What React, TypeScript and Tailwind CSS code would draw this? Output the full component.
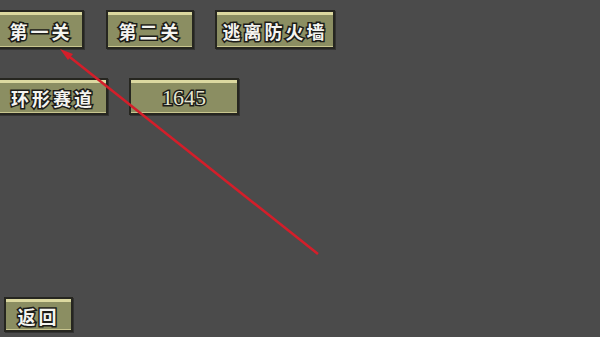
import React from 'react';

type BtnProps = {
  label: string;
  className?: string;
  numeric?: boolean;
};

const GameButton: React.FC<BtnProps> = ({ label, className = '', numeric }) => (
  <div
    className={`flex flex-col border-2 border-[#262620] bg-[#8b8e62] shadow-[1px_1px_0_#333] ${className}`}
  >
    <div className="h-[3px] bg-[#dcd9a0]" />
    <div className="flex flex-1 items-center justify-center">
      <span
        className={
          numeric
            ? "text-[22px] leading-none text-[#e6e6d2] [font-family:'Liberation_Serif',serif] [-webkit-text-stroke:3px_#1c1c18] [paint-order:stroke_fill]"
            : "text-[18px] font-bold leading-none tracking-[3px] text-[#f4f4f0] [font-family:'Noto_Sans_CJK_SC',sans-serif] [-webkit-text-stroke:3px_#1c1c18] [paint-order:stroke_fill]"
        }
      >
        {label}
      </span>
    </div>
    <div className="h-px bg-[#c9c68f]" />
  </div>
);

export default function App() {
  return (
    <div className="relative flex h-[337px] w-[600px] flex-col overflow-hidden bg-[#4b4b4b]">
      <div className="mt-[10px] flex gap-[21px]">
        <GameButton label="第一关" className="-ml-[2px] h-[39px] w-[86px]" />
        <GameButton label="第二关" className="ml-px h-[39px] w-[88px]" />
        <GameButton label="逃离防火墙" className="h-[39px] w-[120px]" />
      </div>
      <div className="mt-[29px] flex gap-[21px]">
        <GameButton label="环形赛道" className="-ml-[2px] h-[37px] w-[110px]" />
        <GameButton label="1645" numeric className="h-[37px] w-[110px]" />
      </div>
      <div className="mt-auto mb-[5px] ml-[4px]">
        <GameButton label="返回" className="h-[35px] w-[69px]" />
      </div>
      <svg className="pointer-events-none absolute inset-0" width="600" height="337">
        <line x1="318" y1="254" x2="66" y2="54" stroke="#d41e2a" strokeWidth="2.5" />
        <polygon points="60,49 73,54 68,60" fill="#d41e2a" />
      </svg>
    </div>
  );
}
